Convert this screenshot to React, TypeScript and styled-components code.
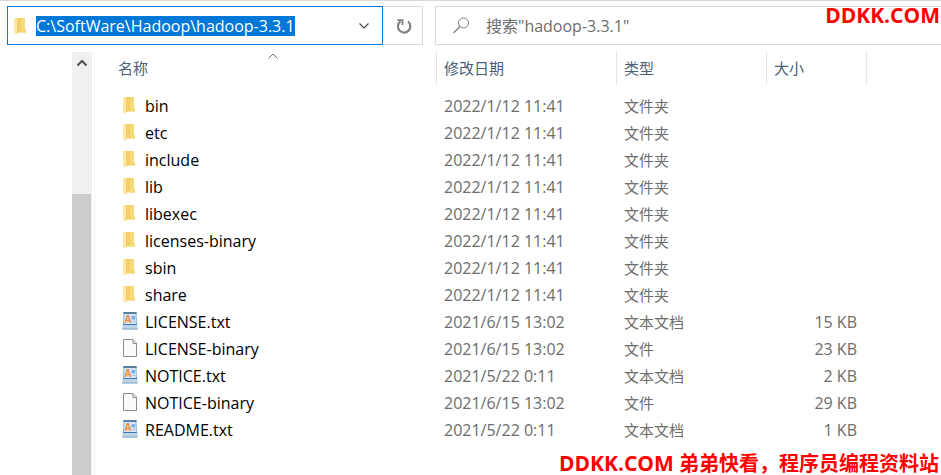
import React, { useEffect, useRef } from "react";
import styled, { createGlobalStyle } from "styled-components";

const latin = '"Open Sans", "Noto Sans CJK SC", sans-serif';

const GlobalStyle = createGlobalStyle`
  *, *::before, *::after { box-sizing: border-box; }
  body {
    margin: 0;
    background: #fff;
    font-family: ${latin};
    font-size: 15px;
    line-height: 20px;
    color: #000;
  }
  button, input { font: inherit; color: inherit; }
`;

const Window = styled.div`
  position: relative;
  display: flex;
  flex-direction: column;
  min-height: 100vh;
  overflow: hidden;
  border-top: 1px solid #d9d9d9;
`;

const Toolbar = styled.div`
  display: flex;
  height: 51px;
  padding: 5px 0 7px 7px;
`;

const AddressBar = styled.div`
  display: flex;
  align-items: center;
  width: 376px;
  padding: 0 12px 0 4px;
  border: 1px solid #0078d7;
  gap: 6px;
`;

const AddressInput = styled.input`
  flex: 1;
  min-width: 0;
  height: 20px;
  padding: 0;
  border: 0;
  outline: 0;
  background: transparent;
  font-size: 16px;
  line-height: 20px;
  &::selection { background: #0078d7; color: #fff; }
`;

const IconButton = styled.button`
  display: flex;
  align-items: center;
  justify-content: center;
  padding: 0;
  border: 0;
  background: transparent;
`;

const RefreshButton = styled(IconButton)`
  width: 40px;
  border: 1px solid #d9d9d9;
  border-left: 0;
`;

const SearchBox = styled.label`
  display: flex;
  flex: 1;
  align-items: center;
  gap: 16px;
  margin-left: 12px;
  padding: 0 0 0 17px;
  border: 1px solid #d9d9d9;
  border-right: 0;
`;

const SearchInput = styled.input`
  flex: 1;
  min-width: 0;
  height: 24px;
  padding: 0;
  border: 0;
  outline: 0;
  background: transparent;
  font-size: 16px;
  &::placeholder { color: #6d6d6d; opacity: 1; }
`;

const Body = styled.div`
  display: flex;
  flex: 1;
  padding-left: 72px;
`;

const ScrollBar = styled.div`
  display: flex;
  flex-direction: column;
  width: 20px;
  background: #f0f0f0;
`;

const ScrollUp = styled(IconButton)`
  height: 21px;
`;

const ScrollThumb = styled.div`
  flex: 1;
  margin: 121px 1px 0 0;
  background: #cdcdcd;
`;

const ListPane = styled.main`
  flex: 1;
  margin-left: 2px;
  padding-left: 15px;
  border-left: 1px solid #f5f5f5;
`;

const FileTable = styled.table`
  width: 757px;
  table-layout: fixed;
  border-collapse: separate;
  border-spacing: 0;
  tbody::before {
    content: "";
    display: block;
    height: 8px;
  }
`;

const HeaderCell = styled.th<{ $width: number; $first?: boolean }>`
  position: relative;
  width: ${(p) => p.$width}px;
  height: 32px;
  padding: 0 0 0 ${(p) => (p.$first ? 8 : 7)}px;
  border-right: 1px solid #e5e5e5;
  color: #4c607a;
  font-weight: 400;
  text-align: left;
`;

const SortMark = styled.span`
  position: absolute;
  top: 0;
  right: 0;
  left: 0;
  display: flex;
  justify-content: center;
`;

const Cell = styled.td<{ $numeric?: boolean }>`
  height: 27px;
  padding: 0 10px 0 7px;
  color: #6d6d6d;
  font-size: ${(p) => (p.$numeric ? 16 : 15)}px;
  white-space: nowrap;
`;

const SizeCell = styled(Cell)`
  text-align: right;
`;

const NameCell = styled(Cell)`
  padding-left: 11px;
  color: #000;
  font-size: 16px;
`;

const FileName = styled.span`
  display: flex;
  align-items: center;
  gap: 6px;
  svg { margin-bottom: 2px; }
`;

const Watermark = styled.div<{ $bottom?: boolean }>`
  position: absolute;
  right: ${(p) => (p.$bottom ? 2 : 1)}px;
  ${(p) => (p.$bottom ? "bottom: 0;" : "top: 3px;")}
  color: #f00;
  font-size: 20px;
  font-weight: 700;
  line-height: 22px;
  pointer-events: none;
`;

const SiteName = styled.span`
  font-size: 21px;
`;

const FolderIcon = () => (
  <svg width="18" height="20" viewBox="0 0 18 20" aria-hidden="true">
    <path d="M4 2H13V13H14V16.500H4Z" fill="#f3cf6b" />
    <path d="M9 2H13V13H14V16.500H9Z" fill="#f8d978" />
    <path d="M2 2H4L6 4V16L4.500 19L2 17Z" fill="#fde8a4" />
    <path d="M5.500 4V17" stroke="#f0cd74" strokeWidth="1" />
  </svg>
);

const PageIcon = () => (
  <svg width="18" height="20" viewBox="0 0 18 20" aria-hidden="true">
    <path d="M2.500 1.500H12L15.500 5V18.500H2.500Z" fill="#fafafa" stroke="#8c8c8c" />
    <path d="M12 1.500V5.500H15.500" fill="#e8e8e8" stroke="#8c8c8c" />
  </svg>
);

const TextIcon = () => (
  <svg width="18" height="20" viewBox="0 0 18 20" aria-hidden="true">
    <path d="M2.500 1H15.500L16 14H2Z" fill="#8fb4d6" />
    <path d="M2.500 1H15.500V3H2.500Z" fill="#5b7f9f" />
    <path d="M3.500 3H14.500L15 13H3Z" fill="#d3e7f8" />
    <text x="3.500" y="11.500" fontSize="10" fontWeight="700" fill="#ef8a3c">A</text>
    <path d="M10.500 5H14V8.500H10.500Z" fill="#7fb0e2" />
    <path d="M11 10.500H14.500" stroke="#a8c8e8" />
    <path d="M2 13H16L17 17.500Q17 18.500 16 18.500H2Q1 18.500 1 17.500Z" fill="#bdd3e8" />
    <path d="M2 13.500H16" stroke="#3f78b4" />
    <path d="M1.500 18H16.500" stroke="#8aa9c6" />
  </svg>
);

const Chevron = ({ up, size, color, weight }: { up?: boolean; size: number; color: string; weight: number }) => (
  <svg width={size} height="8" viewBox="0 0 12 8" aria-hidden="true">
    <path d={up ? "M1.500 6.500L6 2L10.500 6.500" : "M1.500 1.500L6 6L10.500 1.500"} fill="none" stroke={color} strokeWidth={weight} />
  </svg>
);

const RefreshIcon = () => (
  <svg width="18" height="18" viewBox="0 0 18 18" aria-hidden="true">
    <path d="M14 4.500A6.200 6.200 0 1 1 6.500 4.300" fill="none" stroke="#808080" strokeWidth="2.200" />
    <path d="M3.500 3.200H8.500V8" fill="none" stroke="#808080" strokeWidth="1.800" />
  </svg>
);

const SearchIcon = () => (
  <svg width="17" height="17" viewBox="0 0 17 17" aria-hidden="true">
    <circle cx="10.500" cy="6" r="5" fill="none" stroke="#808080" />
    <path d="M7 9.500L0.500 16" stroke="#808080" strokeWidth="1.200" />
  </svg>
);

type Kind = "folder" | "text" | "file";

const icons: Record<Kind, React.FC> = { folder: FolderIcon, text: TextIcon, file: PageIcon };
const labels: Record<Kind, string> = { folder: "文件夹", text: "文本文档", file: "文件" };

const files: { name: string; date: string; kind: Kind; size?: string }[] = [
  { name: "bin", date: "2022/1/12 11:41", kind: "folder" },
  { name: "etc", date: "2022/1/12 11:41", kind: "folder" },
  { name: "include", date: "2022/1/12 11:41", kind: "folder" },
  { name: "lib", date: "2022/1/12 11:41", kind: "folder" },
  { name: "libexec", date: "2022/1/12 11:41", kind: "folder" },
  { name: "licenses-binary", date: "2022/1/12 11:41", kind: "folder" },
  { name: "sbin", date: "2022/1/12 11:41", kind: "folder" },
  { name: "share", date: "2022/1/12 11:41", kind: "folder" },
  { name: "LICENSE.txt", date: "2021/6/15 13:02", kind: "text", size: "15 KB" },
  { name: "LICENSE-binary", date: "2021/6/15 13:02", kind: "file", size: "23 KB" },
  { name: "NOTICE.txt", date: "2021/5/22 0:11", kind: "text", size: "2 KB" },
  { name: "NOTICE-binary", date: "2021/6/15 13:02", kind: "file", size: "29 KB" },
  { name: "README.txt", date: "2021/5/22 0:11", kind: "text", size: "1 KB" },
];

export default function App() {
  const address = useRef<HTMLInputElement>(null);

  useEffect(() => {
    address.current?.focus();
    address.current?.select();
  }, []);

  return (
    <>
      <GlobalStyle />
      <Window>
        <Toolbar>
          <AddressBar>
            <FolderIcon />
            <AddressInput ref={address} aria-label="地址" spellCheck={false} defaultValue="C:\SoftWare\Hadoop\hadoop-3.3.1" />
            <IconButton type="button" aria-label="以前的位置">
              <Chevron size={12} color="#444" weight={1.2} />
            </IconButton>
          </AddressBar>
          <RefreshButton type="button" aria-label="刷新">
            <RefreshIcon />
          </RefreshButton>
          <SearchBox>
            <SearchIcon />
            <SearchInput type="text" aria-label="搜索" placeholder={'搜索"hadoop-3.3.1"'} />
          </SearchBox>
        </Toolbar>
        <Body>
          <ScrollBar>
            <ScrollUp type="button" aria-label="向上滚动">
              <Chevron up size={12} color="#505050" weight={2} />
            </ScrollUp>
            <ScrollThumb />
          </ScrollBar>
          <ListPane>
            <FileTable>
              <thead>
                <tr>
                  <HeaderCell $width={327} $first aria-sort="ascending">
                    名称
                    <SortMark>
                      <Chevron up size={12} color="#6d6d6d" weight={1} />
                    </SortMark>
                  </HeaderCell>
                  <HeaderCell $width={180}>修改日期</HeaderCell>
                  <HeaderCell $width={150}>类型</HeaderCell>
                  <HeaderCell $width={100}>大小</HeaderCell>
                </tr>
              </thead>
              <tbody>
                {files.map((file) => {
                  const Icon = icons[file.kind];
                  return (
                    <tr key={file.name}>
                      <NameCell>
                        <FileName>
                          <Icon />
                          {file.name}
                        </FileName>
                      </NameCell>
                      <Cell $numeric>{file.date}</Cell>
                      <Cell>{labels[file.kind]}</Cell>
                      <SizeCell $numeric>{file.size}</SizeCell>
                    </tr>
                  );
                })}
              </tbody>
            </FileTable>
          </ListPane>
        </Body>
        <Watermark>
          <SiteName>DDKK.COM</SiteName>
        </Watermark>
        <Watermark $bottom>
          <SiteName>DDKK.COM</SiteName> 弟弟快看，程序员编程资料站
        </Watermark>
      </Window>
    </>
  );
}
